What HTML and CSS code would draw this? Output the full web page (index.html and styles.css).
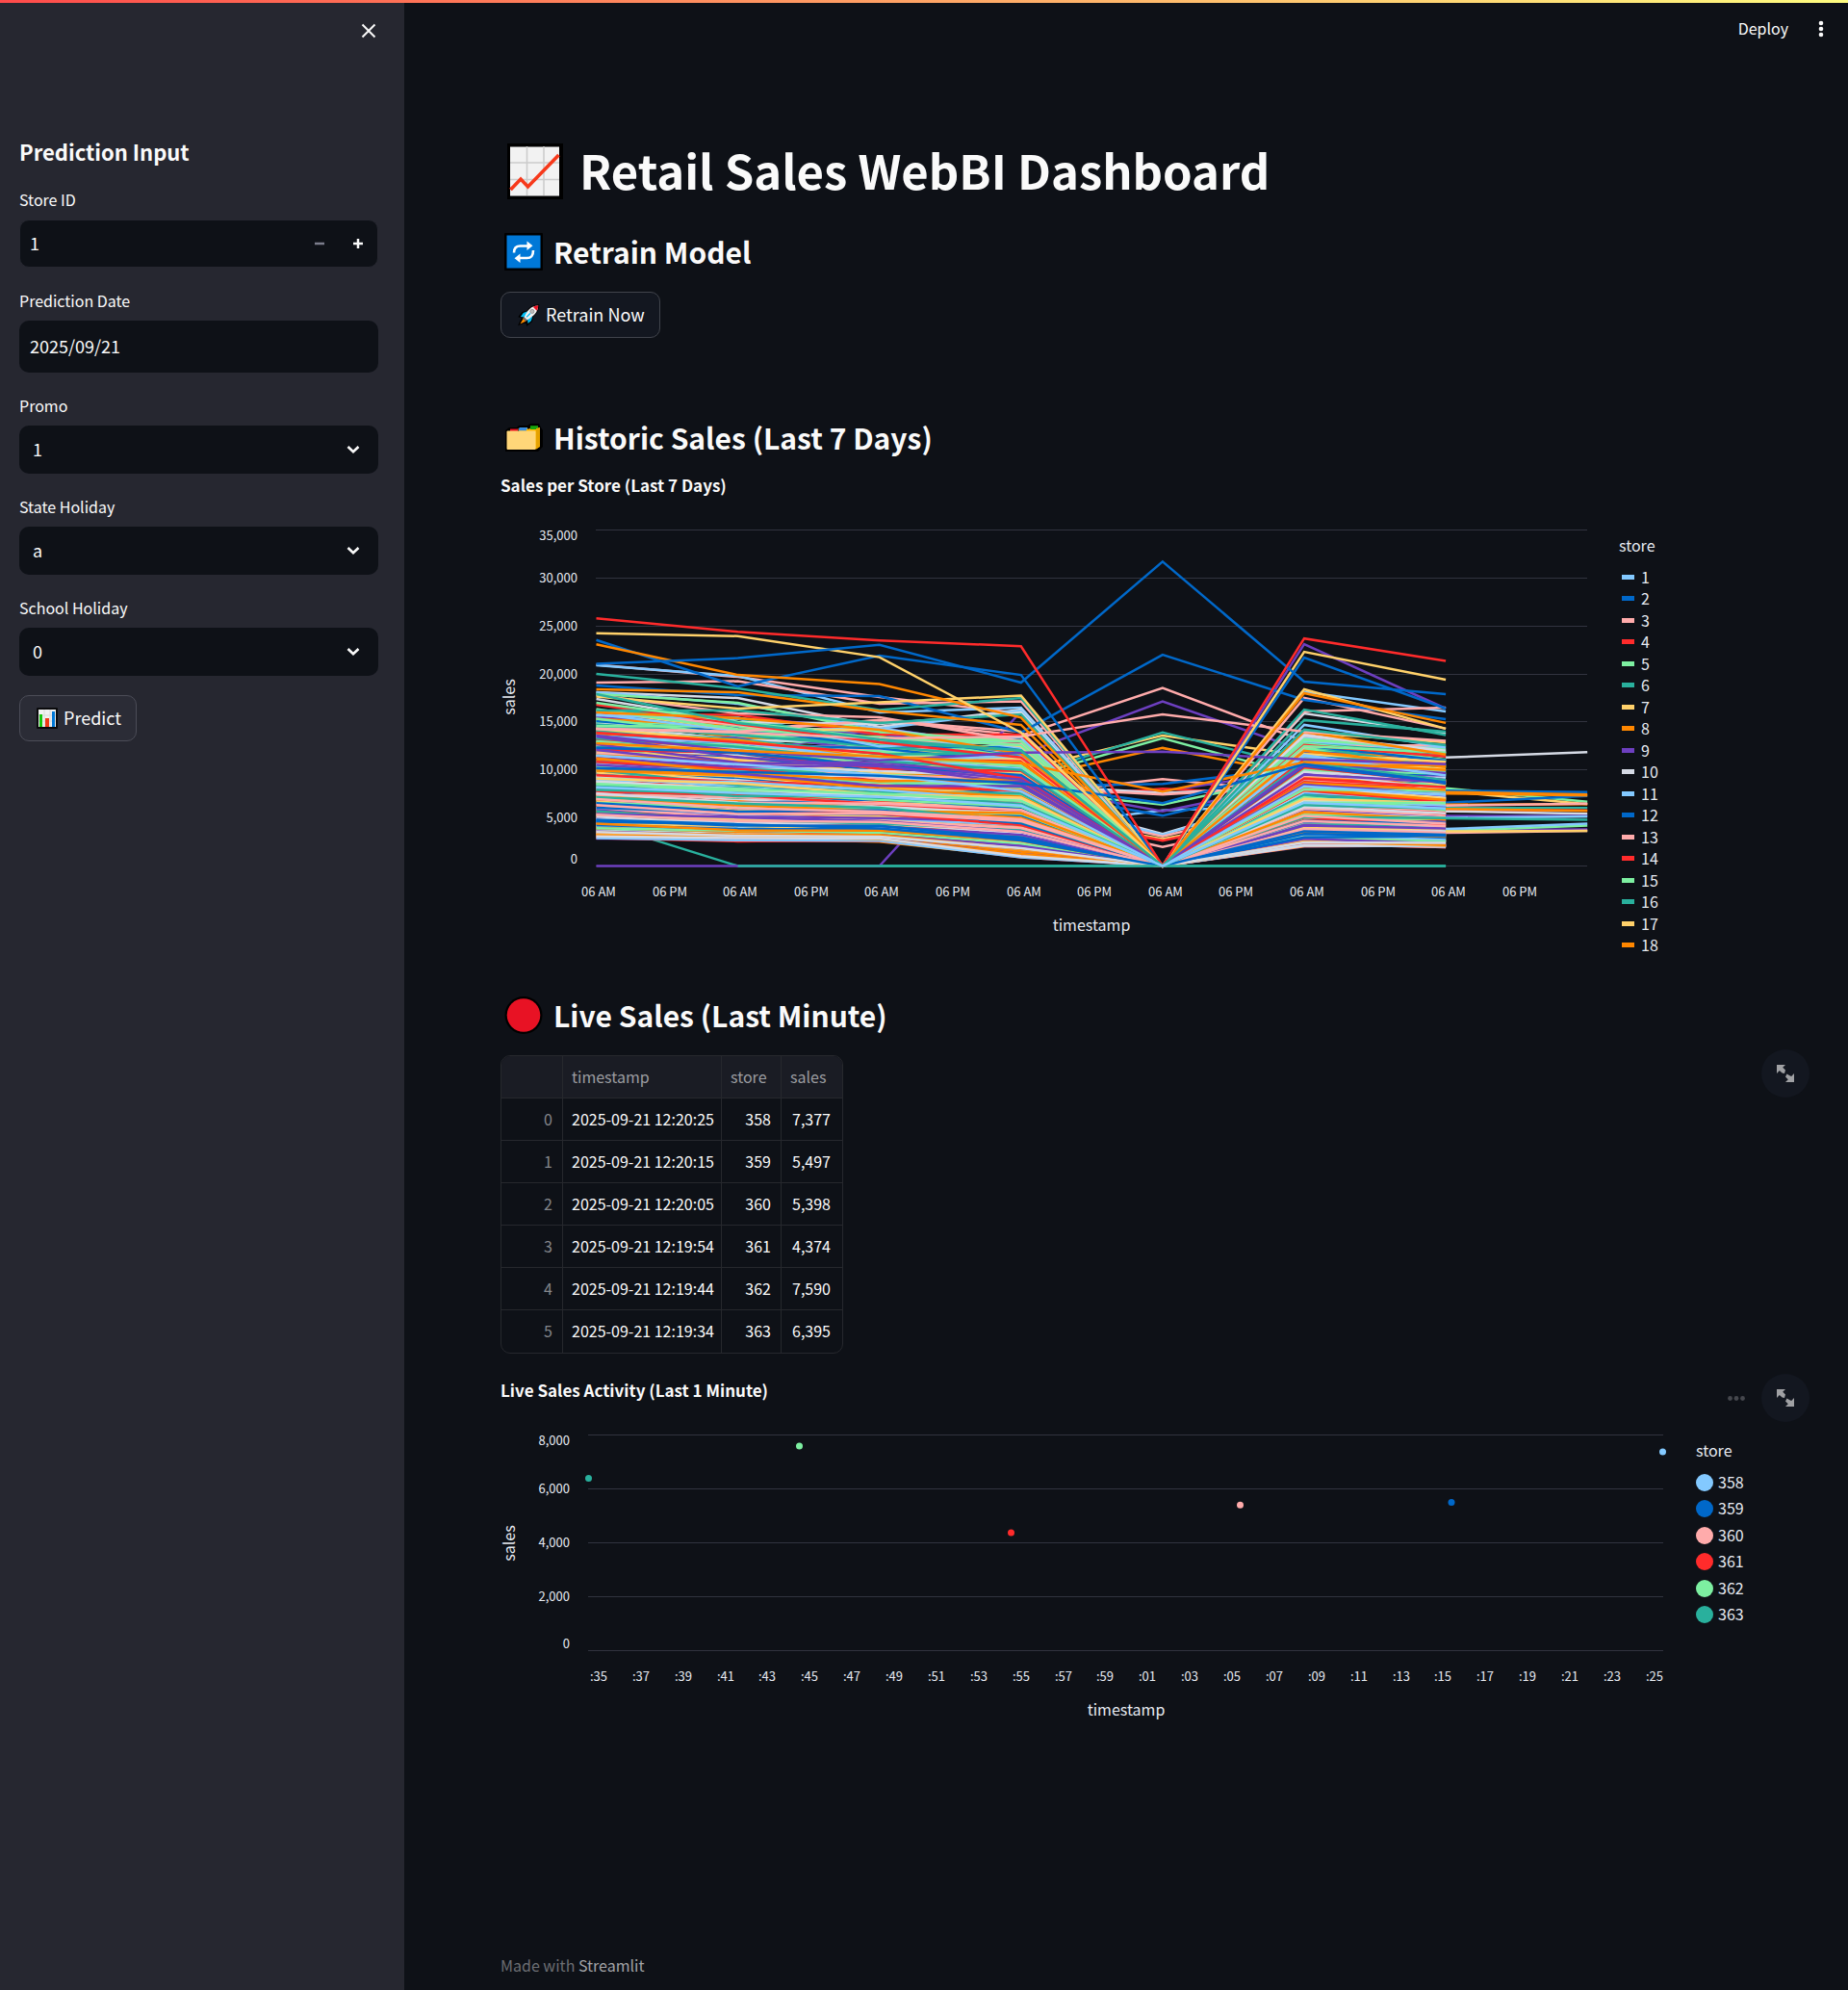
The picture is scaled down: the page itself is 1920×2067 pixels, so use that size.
FILE: index.html
```html
<!DOCTYPE html>
<html lang="en">
<head>
<meta charset="utf-8">
<meta name="viewport" content="width=device-width, initial-scale=1">
<title>Retail Sales WebBI Dashboard</title>
<link rel="stylesheet" href="styles.css">
</head>
<body>
<div class="decoration"></div>
<div class="app">
  <aside class="sidebar">
    <div class="sidebar-top">
      <button class="icon-button" type="button" aria-label="Close sidebar">
        <svg width="16" height="16" viewBox="0 0 16 16"><path d="M1.5 1.5l13 13M14.5 1.5l-13 13" stroke="#fafafa" stroke-width="2" fill="none"/></svg>
      </button>
    </div>
    <form class="form">
      <h2 class="form-title">Prediction Input</h2>
      <div class="field">
        <label class="label" for="store">Store ID</label>
        <div class="number">
          <input class="number-input" id="store" type="number" value="1" min="1">
          <button class="step step-off" type="button" aria-label="Decrease"><svg width="10" height="10" viewBox="0 0 10 10"><path d="M0 5h10" stroke="currentColor" stroke-width="2.5"/></svg></button>
          <button class="step" type="button" aria-label="Increase"><svg width="10" height="10" viewBox="0 0 10 10"><path d="M0 5h10M5 0v10" stroke="currentColor" stroke-width="2.5"/></svg></button>
        </div>
      </div>
      <div class="field">
        <label class="label" for="date">Prediction Date</label>
        <input class="date-input" id="date" type="text" value="2025/09/21">
      </div>
      <div class="field">
        <label class="label" for="promo">Promo</label>
        <div class="select-box">
          <select class="select" id="promo"><option>1</option><option>0</option></select>
          <svg class="chevron" width="14" height="10" viewBox="0 0 14 10"><path d="M1.5 2l5.5 5.300 5.500-5.300" stroke="#fafafa" stroke-width="2.600" fill="none"/></svg>
        </div>
      </div>
      <div class="field">
        <label class="label" for="state">State Holiday</label>
        <div class="select-box">
          <select class="select" id="state"><option>a</option><option>b</option></select>
          <svg class="chevron" width="14" height="10" viewBox="0 0 14 10"><path d="M1.5 2l5.5 5.300 5.500-5.300" stroke="#fafafa" stroke-width="2.600" fill="none"/></svg>
        </div>
      </div>
      <div class="field">
        <label class="label" for="school">School Holiday</label>
        <div class="select-box">
          <select class="select" id="school"><option>0</option><option>1</option></select>
          <svg class="chevron" width="14" height="10" viewBox="0 0 14 10"><path d="M1.5 2l5.5 5.300 5.500-5.300" stroke="#fafafa" stroke-width="2.600" fill="none"/></svg>
        </div>
      </div>
      <button class="button button-side" type="button">
        <svg width="22" height="22" viewBox="0 0 22 22"><rect width="22" height="22" rx="1" fill="#0a0a0c"/><rect x="2" y="2" width="18" height="18" fill="#f2f2f2"/><path d="M2 8h18M2 14h18M8 2v18M14 2v18" stroke="#dadada"/><rect x="3" y="7" width="3" height="13" fill="#16c60c"/><rect x="9" y="11" width="4" height="9" fill="#f03a17"/><rect x="16" y="4" width="3" height="16" fill="#0078d7"/></svg>
        <span>Predict</span>
      </button>
    </form>
  </aside>

  <main class="main">
    <div class="toolbar">
      <button class="deploy" type="button">Deploy</button>
      <button class="icon-button" type="button" aria-label="Main menu">
        <svg width="6" height="18" viewBox="0 0 6 18"><g fill="#fafafa"><circle cx="3" cy="3" r="2.300"/><circle cx="3" cy="9" r="2.300"/><circle cx="3" cy="15" r="2.300"/></g></svg>
      </button>
    </div>

    <h1 class="title">
      <svg class="title-icon" width="58" height="58" viewBox="0 0 58 58"><rect width="58" height="58" fill="#000"/><rect x="3" y="3.500" width="51" height="51" fill="#f2f2f2"/><path d="M3 20h51M3 37.500h51M20.500 3v51M38 3v51" stroke="#ccc" stroke-width="1.600"/><path d="M3.500 48L14 37l7.500 8L53.500 12" fill="none" stroke="#f7391b" stroke-width="3.600"/></svg>
      <span>Retail Sales WebBI Dashboard</span>
    </h1>

    <section class="retrain">
      <h2 class="heading">
        <svg width="40" height="40" viewBox="0 0 40 40"><rect width="40" height="39" rx="1" fill="#000"/><rect x="2.500" y="2.500" width="35" height="34" fill="#0078d7"/><g fill="none" stroke="#fff" stroke-width="2.600"><path d="M10 20.500c0-5 2-7 6.500-7h8"/><path d="M30 18c0 6-2 8-6.500 8H15.500"/></g><path d="M23.500 8.500v9.500l6-4.700zM16.500 21.500V31l-6-4.800z" fill="#fff"/></svg>
        <span>Retrain Model</span>
      </h2>
      <button class="button" type="button">
        <svg width="23" height="24" viewBox="0 0 24 24"><path d="M22.500 1.500c-6 0-9.500 2.500-12 6.500L5 9.500 1.500 14l3.500 1-3.500 7.500 8-3 .5 3.500 5-4 1-5.500c4-3.500 7-7 6.500-12z" fill="#000" stroke="#000" stroke-width="1.500"/><path d="M10.500 8L6 10l-3 4 5 .5zM16 13.500l-1.500 5-3.500 3-.5-5z" fill="#00bcf2"/><path d="M6 16l-3.500 6 6-3z" fill="#ff8c00"/><path d="M5.500 15.500l3 3.500 2-1-4-4z" fill="#767676"/><path d="M7 14.500C10 7 14 2.500 22 2c0 7-5 11.500-12 15.500z" fill="#f2f2f2"/><path d="M16.500 3.500C18 2.500 20 2 22.300 1.700 22 4 21.500 6 20.500 7.500z" fill="#e81123"/><circle cx="15.500" cy="8.300" r="2.200" fill="#bbb" stroke="#777" stroke-width=".6"/><path d="M9.500 14.500l4-4" stroke="#00bcf2" stroke-width="1.400"/></svg>
        <span>Retrain Now</span>
      </button>
    </section>

    <section class="historic">
      <h2 class="heading">
        <svg width="40" height="40" viewBox="0 -4 40 40"><path d="M1 8l4-3h8l2-2h9l3-2h9l2 4 2 3v17l-5 5H1z" fill="#000"/><rect x="6" y="6.500" width="8" height="4" fill="#e81123"/><rect x="16" y="5" width="8" height="4" fill="#3a96dd"/><rect x="27" y="3.500" width="8" height="4" fill="#16c60c"/><path d="M14 6.500h12l1-1h10v19l-4 3h-6z" fill="#ffb900"/><path d="M15 5.500h8v3h-8z" fill="#3a8bdd"/><path d="M27 3.500h8v3.500h-8z" fill="#16a60c"/><path d="M33 6l4-1v20l-4 2.500z" fill="#e6a200"/><rect x="2.500" y="8.500" width="30" height="19.500" rx="1" fill="#ffd679"/></svg>
        <span>Historic Sales (Last 7 Days)</span>
      </h2>
      <h3 class="chart-title">Sales per Store (Last 7 Days)</h3>
      <svg class="chart" id="historic-chart" viewBox="0 0 1300 487" role="img" aria-label="Sales per store, last 7 days"></svg>
    </section>

    <section class="live">
      <h2 class="heading">
        <svg width="40" height="40" viewBox="0 0 40 40"><circle cx="20" cy="19.500" r="19.500" fill="#000"/><circle cx="20" cy="19.500" r="17.300" fill="#e81224"/></svg>
        <span>Live Sales (Last Minute)</span>
      </h2>
      <div class="table-area">
        <div class="table-frame">
          <table class="table">
            <colgroup><col class="col-index"><col class="col-time"><col class="col-store"><col class="col-sales"></colgroup>
            <thead><tr><th></th><th>timestamp</th><th>store</th><th>sales</th></tr></thead>
            <tbody>
              <tr><td>0</td><td>2025-09-21 12:20:25</td><td>358</td><td>7,377</td></tr>
              <tr><td>1</td><td>2025-09-21 12:20:15</td><td>359</td><td>5,497</td></tr>
              <tr><td>2</td><td>2025-09-21 12:20:05</td><td>360</td><td>5,398</td></tr>
              <tr><td>3</td><td>2025-09-21 12:19:54</td><td>361</td><td>4,374</td></tr>
              <tr><td>4</td><td>2025-09-21 12:19:44</td><td>362</td><td>7,590</td></tr>
              <tr><td>5</td><td>2025-09-21 12:19:34</td><td>363</td><td>6,395</td></tr>
            </tbody>
          </table>
        </div>
        <button class="expand" type="button" aria-label="Fullscreen table"><svg width="18" height="18" viewBox="0 0 18 18"><path d="M0 0h9L6.200 2.800 9 5.600 8 9 5.600 8.500 2.800 6 0 9zM18 18H9l2.800-2.800L9 12.400 10.500 9.500l3 1.700L15.200 12 18 9z" fill="#a0a1a4"/></svg></button>
      </div>
      <div class="chart-area">
        <h3 class="chart-title">Live Sales Activity (Last 1 Minute)</h3>
        <svg class="chart" id="live-chart" viewBox="0 0 1300 343" role="img" aria-label="Live sales activity, last minute"></svg>
        <button class="more" type="button" aria-label="Chart actions"><svg width="18" height="5" viewBox="0 0 18 5"><g fill="#45474d"><circle cx="2.500" cy="2.500" r="2.400"/><circle cx="9" cy="2.500" r="2.400"/><circle cx="15.500" cy="2.500" r="2.400"/></g></svg></button>
        <button class="expand" type="button" aria-label="Fullscreen chart"><svg width="18" height="18" viewBox="0 0 18 18"><path d="M0 0h9L6.200 2.800 9 5.600 8 9 5.600 8.500 2.800 6 0 9zM18 18H9l2.800-2.800L9 12.400 10.500 9.500l3 1.700L15.200 12 18 9z" fill="#a0a1a4"/></svg></button>
      </div>
    </section>

    <footer class="footer">Made with <a href="#streamlit">Streamlit</a></footer>
  </main>
</div>
<script src="charts.js"></script>
</body>
</html>
```
FILE: styles.css
```css
* { box-sizing: border-box; }

body {
  margin: 0;
  background: #0e1117;
  color: #fafafa;
  font-family: "Noto Sans CJK SC", "Noto Sans", sans-serif;
  font-size: 18px;
  line-height: 28px;
}

button, input, select { font: inherit; color: inherit; }
button { cursor: pointer; }
h1, h2, h3 { margin: 0; }

.decoration {
  position: absolute;
  inset: 0 0 auto 0;
  z-index: 2;
  height: 3px;
  background: linear-gradient(90deg, #ff4b4b, #fffd80);
}

.app { display: flex; min-height: 100vh; }

/* Sidebar */
.sidebar { flex: 0 0 420px; background: #262730; }
.sidebar-top { display: flex; justify-content: flex-end; padding: 12px 17px 0; }
.icon-button {
  display: flex; align-items: center; justify-content: center;
  width: 40px; height: 40px; padding: 0; border: 0; background: none;
}
.form { display: flex; flex-direction: column; gap: 20px; padding: 91px 27px 20px 20px; }
.form-title { padding-bottom: 2px; font-size: 22px; font-weight: 600; line-height: 28px; }
.field { display: flex; flex-direction: column; gap: 5px; }
.label { padding-bottom: 2px; font-size: 16px; line-height: 28px; }
.number {
  display: flex; height: 50px; border: 1px solid #262730;
  border-radius: 10px; background: #0e1117; overflow: hidden;
}
.number-input {
  flex: 1; min-width: 0; padding: 0 10px 2px; border: 0; background: none;
  appearance: textfield; outline: 0;
}
.number-input::-webkit-inner-spin-button { appearance: none; }
.step {
  display: flex; align-items: center; justify-content: center;
  width: 40px; padding: 0; border: 0; background: none;
}
.step-off { color: #7b7d8c; }
.date-input {
  width: 100%; height: 54px; padding: 0 11px 2px; border: 0;
  border-radius: 10px; background: #0e1117;
}
.select-box { display: grid; align-items: center; }
.select {
  grid-area: 1 / 1; width: 100%; height: 50px; padding: 0 14px 2px; border: 0;
  border-radius: 10px; background: #0e1117; appearance: none;
}
.chevron { grid-area: 1 / 1; justify-self: end; margin-right: 19px; pointer-events: none; }
.button {
  display: inline-flex; align-items: center; align-self: flex-start; gap: 6px;
  height: 48px; padding: 0 15px 0 17px; border: 1px solid #41444c;
  border-radius: 10px; background: #131720; white-space: nowrap;
}
.button span { padding-bottom: 2px; }
.button-side { border-color: #4b4c57; background: #2b2c36; }

/* Main column */
.main {
  position: relative; flex: 1; min-width: 0;
  display: flex; flex-direction: column; padding: 145px 100px 12px;
}
.toolbar {
  position: absolute; top: 10px; right: 8px;
  display: flex; align-items: center; gap: 14px;
}
.deploy { padding: 0 0 2px; border: 0; background: none; font-size: 16px; }
.title {
  display: flex; align-items: center; gap: 17px; padding-left: 7px;
  font-size: 49px; font-weight: 700; line-height: 62px;
}
.title span { padding-bottom: 4px; }
.heading {
  display: flex; align-items: center; gap: 11px; padding-left: 4px;
  font-size: 30px; font-weight: 600; line-height: 40px;
}
.heading span { padding-bottom: 2px; }
.retrain { display: flex; flex-direction: column; gap: 20px; margin-top: 30px; }
.historic { margin-top: 83px; }
.chart-title { padding-bottom: 2px; font-size: 17px; font-weight: 700; line-height: 22px; }
.historic .chart-title { margin-top: 17px; }
.chart { display: block; width: 100%; height: auto; overflow: visible; }
.chart text { fill: #e6eaf1; font-size: 13px; }
.chart .axis-title { font-size: 16px; }
.chart .legend-title { font-size: 16px; }
.chart .legend-label { font-size: 16px; }
.chart .grid { stroke: #31333f; stroke-width: 1; }
.live { margin-top: 30px; }

.table-area { position: relative; margin-top: 20px; }
.table-frame {
  width: 356px; border: 1px solid #26282d; border-radius: 10px; overflow: hidden;
}
.table {
  width: 100%; table-layout: fixed; border-collapse: separate; border-spacing: 0;
  font-size: 16px; line-height: 24px;
}
.col-index { width: 64px; }
.col-time { width: 165px; }
.col-store { width: 62px; }
.col-sales { width: 63px; }
.table th, .table td {
  height: 44px; padding: 0 10px 2px 9px; white-space: nowrap;
  border-right: 1px solid #26282d; border-bottom: 1px solid #26282d;
}
.table th {
  background: #1a1c24; color: #9c9da1;
  font-weight: 400; text-align: left;
}
.table td { text-align: right; }
.table td:first-child { color: #84868b; }
.table td:nth-child(2) { text-align: left; }
.table td:last-child { padding-right: 12px; }
.table th:last-child, .table td:last-child { border-right: 0; }
.table tbody tr:last-child td { border-bottom: 0; }

.chart-area { position: relative; margin-top: 27px; }
.expand {
  position: absolute; top: -6px; right: -60px;
  display: flex; align-items: center; justify-content: center;
  width: 50px; height: 50px; padding: 0; border: 0;
  border-radius: 50%; background: #131720;
}
.more { position: absolute; top: 9px; right: 7px; display: flex; padding: 8px 0; border: 0; background: none; }

.footer { margin-top: auto; color: #6c6e73; font-size: 16px; line-height: 28px; }
.footer a { color: #a2a3a6; text-decoration: none; }
```
FILE: charts.js
```js
const NS = "http://www.w3.org/2000/svg";
const PALETTE = ["#83c9ff", "#0068c9", "#ffabab", "#ff2b2b", "#7defa1",
  "#29b09d", "#ffd16a", "#ff8700", "#6d3fc0", "#d5dae5"];
const [SKY, BLUE, PINK, RED, GREEN, TEAL, YELLOW, ORANGE, PURPLE, GRAY] = PALETTE;

function add(svg, name, attrs, text) {
  const el = document.createElementNS(NS, name);
  for (const key in attrs) el.setAttribute(key, attrs[key]);
  if (text !== undefined) el.textContent = text;
  svg.appendChild(el);
  return el;
}

/* Historic chart */
const hist = document.getElementById("historic-chart");
const hx = i => 99.5 + i * 147.1;
const hy = v => 382.5 - v * 349 / 35000;

const yLabels = ["0", "5,000", "10,000", "15,000", "20,000", "25,000", "30,000", "35,000"];
yLabels.forEach((label, i) => {
  const y = Math.floor(hy(i * 5000)) + 0.5;
  add(hist, "line", { class: "grid", x1: 99, x2: 1129, y1: y, y2: y });
  const shift = i === 0 ? -7 : i === 7 ? 6 : 0;
  add(hist, "text", { x: 80, y: y + 4.5 + shift, "text-anchor": "end" }, label);
});

function line(color, values) {
  const points = [];
  values.forEach((v, i) => { if (v !== null) points.push(hx(i).toFixed(1) + "," + hy(v).toFixed(1)); });
  add(hist, "polyline", { points: points.join(" "), fill: "none", stroke: color, "stroke-width": 2.5 });
}

let seed = 20250921;
function random() {
  seed = (seed * 1664525 + 1013904223) % 4294967296;
  return seed / 4294967296;
}

/* Stores that close on the Sunday: each drops to zero on day five. */
function bundle(count) {
  const rows = [];
  for (let i = 0; i < count; i++) {
    const t = i / (count - 1);
    const n = () => (random() - 0.5) * 1500 * (0.2 + t);
    rows.push([
      2900 + 13300 * Math.pow(t, 1.25) + n() * 0.6,
      2700 + 12400 * Math.pow(t, 1.3) + n(),
      2600 + 11200 * Math.pow(t, 1.3) + n(),
      1000 + 12000 * Math.pow(t, 1.15) + n(),
      0,
      2150 + 11300 * Math.pow(t, 1.3) + n(),
      2000 + 10000 * Math.pow(t, 1.3) + n()
    ]);
  }
  for (let i = rows.length - 1; i > 0; i--) {
    const j = Math.floor(random() * (i + 1));
    [rows[i], rows[j]] = [rows[j], rows[i]];
  }
  return rows;
}

/* Stores open on the Sunday */
[
  [PINK, 15300, 14200, 15200, 13600, 18550, 13000, 11900],
  [PURPLE, 13600, 11600, 14300, 11600, 17150, 12000, 10500],
  [YELLOW, 12600, 12000, 11300, 10000, 13600, 11500, 10400],
  [TEAL, 12300, 11200, 10600, 9300, 13900, 10300, 9400],
  [GREEN, 11800, 10900, 10500, 9100, 13300, 9300, 8900],
  [ORANGE, 13000, 12000, 11300, 9000, 12300, 9400, 8600],
  [PINK, 9600, 8800, 8500, 7400, 9050, 7600, 7000],
  [PURPLE, 10400, 9900, 9200, 7900, 7800, 10000, 9200],
  [BLUE, 11000, 10600, 9700, 8300, 8550, 10300, 9500],
  [RED, 8900, 8100, 7600, 6900, 8050, 7300, 6500],
  [GRAY, 9900, 9300, 8900, 8500, 7600, 8300, 7800],
  [PINK, 9300, 8700, 8500, 8200, 7450, 8300, 7700],
  [GREEN, 9300, 8600, 8500, 7900, 6400, 9500, 8500],
  [SKY, 7000, 6400, 6200, 4000, 5800, 6300, 6000],
  [BLUE, 9100, 8600, 8000, 7900, 5250, 8700, 8000],
  [PURPLE, 9900, 9200, 8700, 8400, 5700, 8700, 8000],
  [GRAY, 8700, 7900, 7800, 7300, 3350, 7700, 7000],
  [SKY, 8600, 7800, 7800, 7000, 3250, 7700, 7000],
  [PINK, 7600, 7000, 6700, 6300, 3100, 6600, 6100],
  [YELLOW, 6900, 6200, 6000, 5400, 2800, 5700, 5200],
  [RED, 7100, 6200, 6100, 5500, 2650, 5800, 5200],
  [PINK, 6500, 5800, 5600, 5200, 2000, 5200, 4900],
  [TEAL, 4600, 0, 0, 0, 0, 0, 0],
  [PURPLE, 0, 0, 0, 16100, 0, 23100, 16400]
].forEach(([color, ...values]) => line(color, values));

bundle(260).forEach((values, i) => line(PALETTE[(i * 7 + (i >> 3)) % 10], values));

/* Lowest and highest sellers */
[
  [TEAL, null, 0, 0, 0, 0, 0, 0],
  [PINK, 20950, 19700, 17600, 15900, 0, 13600, 11900],
  [SKY, 20900, 19800, 16000, 16500, 0, 18150, 16100],
  [GRAY, 18100, 17500, 14500, 16300, 0, 15900, 13800],
  [SKY, 18100, 16900, 14300, 16200, 0, 14700, 12400],
  [GREEN, 17900, 17000, 14000, 13000, 0, 13200, 12100],
  [PINK, 17800, 15900, 15500, 13000, 0, 13700, 11800],
  [GRAY, 17400, 15000, 14800, 16000, 0, 13600, 12000],
  [PINK, 14300, 14000, 15200, 14000, 0, 16100, 16500],
  [RED, 16800, 14800, 12900, 11300, 0, 12600, 11400],
  [TEAL, 16200, 16200, 14900, 15800, 0, 15200, 14000],
  [GREEN, 17000, 15000, 13300, 13000, 0, 12500, 11800],
  [PINK, 19100, 19250, 16900, 17150, 0, 17500, 14300],
  [BLUE, 18800, 17800, 17700, 13900, 22000, 17300, 15300],
  [TEAL, 20000, 18500, 16250, 17500, 0, 16300, 13650],
  [ORANGE, 18400, 18100, 16150, 14700, 0, 14000, 11600],
  [ORANGE, 16000, 15400, 14200, 11700, 0, 12000, 10300],
  [RED, 13900, 12900, 11700, 9100, 0, 9100, 8200],
  [PURPLE, 13500, 11300, 10400, 9000, 0, 10600, 8700],
  [SKY, 11500, 10600, 9500, 7800, 0, 8300, 7400],
  [YELLOW, 17650, 16400, 17050, 17750, 0, 18400, 14300],
  [PINK, 14300, 13900, 13300, 13500, 15800, 14000, 13050],
  [PURPLE, 13600, 12000, 11000, 11800, 11900, 11100, 10600],
  [ORANGE, 12800, 12000, 11400, 10700, 7750, 10800, 10000],
  [BLUE, 10200, 9800, 9400, 8600, 6550, 10600, 8700],
  [BLUE, 23550, 18700, 21900, 19900, 0, 21700, 16400],
  [ORANGE, 23100, 19900, 18950, 15450, 0, 18000, 14900],
  [YELLOW, 24250, 23950, 21750, 13900, 0, 22300, 19400],
  [BLUE, 21050, 21650, 23050, 19100, 31700, 19200, 17900],
  [RED, 25800, 24400, 23500, 22900, 0, 23700, 21350],
  [TEAL, 17900, 14900, 13200, 12000, 0, 14200, 12600],
  [SKY, 8200, 7600, 7200, 6300, 0, 6600, 6000]
].forEach(([color, ...values]) => line(color, values));

/* Stores already reporting on the last day */
[
  [GRAY, 11300, 11850], [GREEN, 8100, 6700], [YELLOW, 7800, 6450], [BLUE, 7850, 7700],
  [BLUE, 6600, 7300], [ORANGE, 7700, 7450], [ORANGE, 7550, 7350], [ORANGE, 6400, 6450],
  [PINK, 6300, 6500], [TEAL, 6050, 6050], [RED, 5850, 5800], [ORANGE, 5950, 5750],
  [GRAY, 5700, 5450], [PURPLE, 5200, 5200], [SKY, 5000, 5150], [TEAL, 4950, 4800],
  [PURPLE, 3750, 3800], [GREEN, 3650, 4200], [SKY, 3850, 4400], [PINK, 3450, 3650],
  [YELLOW, 3600, 3650]
].forEach(([color, a, b]) => line(color, [null, null, null, null, null, null, a, b]));

for (let i = 0; i < 14; i++) {
  add(hist, "text", { x: Math.round(102 + i * 73.6), y: 414, "text-anchor": "middle" }, i % 2 ? "06 PM" : "06 AM");
}
add(hist, "text", { class: "axis-title", x: 614, y: 450, "text-anchor": "middle" }, "timestamp");
add(hist, "text", { class: "axis-title", x: 0, y: 0, "text-anchor": "middle", transform: "translate(15 207) rotate(-90)" }, "sales");
add(hist, "text", { class: "legend-title", x: 1162, y: 56 }, "store");
for (let i = 0; i < 18; i++) {
  const y = Math.floor(83 + i * 22.5);
  add(hist, "rect", { x: 1165, y: y - 3, width: 13, height: 5, fill: PALETTE[i % 10] });
  add(hist, "text", { class: "legend-label", x: 1185, y: y + 6 }, String(i + 1));
}

/* Live chart */
const live = document.getElementById("live-chart");
["0", "2,000", "4,000", "6,000", "8,000"].forEach((label, i) => {
  const y = 257.5 - i * 56;
  add(live, "line", { class: "grid", x1: 91, x2: 1208, y1: y, y2: y });
  const shift = i === 0 ? -7 : i === 4 ? 6 : 0;
  add(live, "text", { x: 72, y: y + 4.5 + shift, "text-anchor": "end" }, label);
});
[[91.5, 6395, TEAL], [310.5, 7590, GREEN], [530.5, 4374, RED],
  [768.5, 5398, PINK], [988, 5497, BLUE], [1207.5, 7377, SKY]
].forEach(([x, v, color]) => add(live, "circle", { cx: x, cy: 257.5 - v * 0.028, r: 3.5, fill: color }));
for (let i = 0; i < 26; i++) {
  const s = (35 + i * 2) % 60;
  add(live, "text", { x: Math.round(102 + i * 43.87), y: 289, "text-anchor": "middle" }, ":" + String(s).padStart(2, "0"));
}
add(live, "text", { class: "axis-title", x: 650, y: 325, "text-anchor": "middle" }, "timestamp");
add(live, "text", { class: "axis-title", x: 0, y: 0, "text-anchor": "middle", transform: "translate(15 146) rotate(-90)" }, "sales");
add(live, "text", { class: "legend-title", x: 1242, y: 56 }, "store");
for (let i = 0; i < 6; i++) {
  const y = Math.floor(83 + i * 27.5);
  add(live, "circle", { cx: 1251, cy: y, r: 9, fill: PALETTE[i] });
  add(live, "text", { class: "legend-label", x: 1265, y: y + 6 }, String(358 + i));
}
```
